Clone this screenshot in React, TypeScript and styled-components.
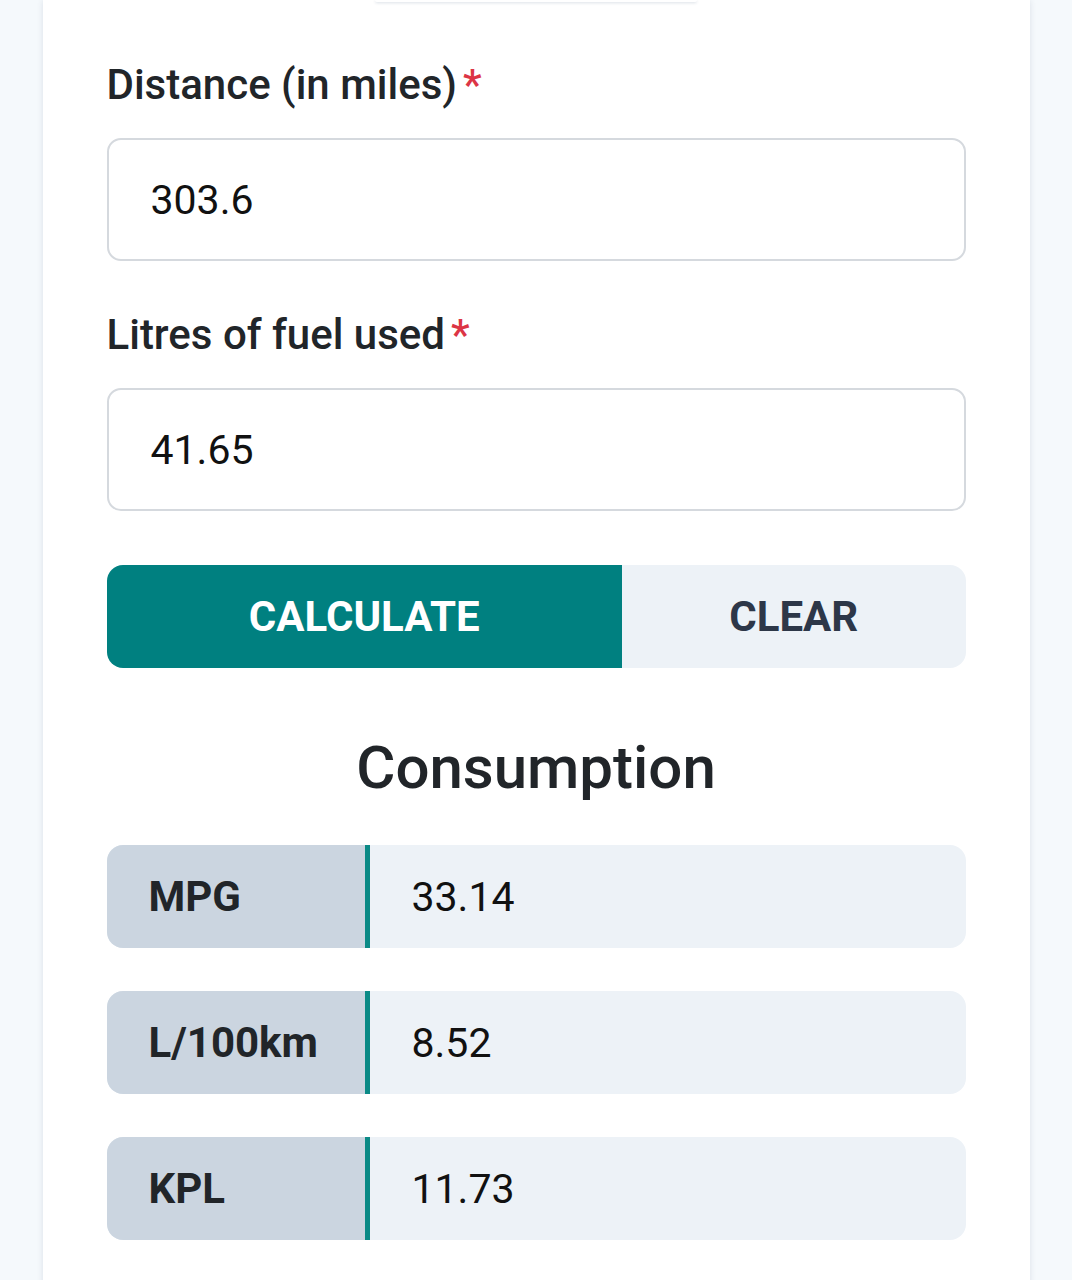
import styled, { createGlobalStyle } from 'styled-components';

const GlobalStyle = createGlobalStyle`
	html, body {
		margin: 0;
		padding: 0;
		background: #f5f9fc;
		font-family: Roboto, 'Liberation Sans', sans-serif;
		color: #212529;
	}
	* {
		box-sizing: border-box;
	}
`;

const Page = styled.div`
	display: flex;
	justify-content: center;
	min-height: 1280px;
	overflow: hidden;
`;

const Card = styled.div`
	width: 987px;
	background: #ffffff;
	box-shadow: 0 0 6px rgba(30, 50, 80, 0.12);
	padding: 0 64px 80px 64px;
	display: flex;
	flex-direction: column;
`;

const TopBox = styled.div`
	align-self: center;
	width: 322px;
	height: 2px;
	background: #ffffff;
	border-radius: 0 0 10px 10px;
	box-shadow: 0 1px 3px rgba(30, 60, 100, 0.18);
	margin-bottom: 53px;
`;

const Field = styled.div`
	display: flex;
	flex-direction: column;
	margin-bottom: 44px;

	&.last {
		margin-bottom: 54px;
	}
`;

const Label = styled.label`
	font-size: 42px;
	line-height: 60px;
	font-weight: 500;
	color: #212529;
	margin-bottom: 23px;

	span {
		color: #dc3545;
		margin-left: 6px;
	}
`;

const Input = styled.input`
	height: 123px;
	width: 100%;
	border: 2px solid #d5d9de;
	border-radius: 14px;
	padding: 0 42px;
	font-family: Roboto, 'Liberation Sans', sans-serif;
	font-size: 41px;
	color: #111111;
	background: #ffffff;
	outline: none;
`;

const ButtonRow = styled.div`
	display: flex;
	height: 103px;
	border-radius: 16px;
	overflow: hidden;
	margin-bottom: 65px;
`;

const Button = styled.button<{ $primary?: boolean }>`
	flex: ${(p) => (p.$primary ? 3 : 2)} 1 0;
	padding: 0;
	border: none;
	font-family: Roboto, 'Liberation Sans', sans-serif;
	font-size: 42px;
	font-weight: 700;
	text-transform: uppercase;
	background: ${(p) => (p.$primary ? '#008080' : '#edf2f7')};
	color: ${(p) => (p.$primary ? '#ffffff' : '#2d3748')};
	cursor: pointer;
`;

const Heading = styled.h2`
	margin: 0 0 42px 0;
	text-align: center;
	font-size: 60px;
	line-height: 70px;
	font-weight: 500;
	color: #212529;
`;

const Results = styled.div`
	display: flex;
	flex-direction: column;
	gap: 43px;
`;

const ResultRow = styled.div`
	display: flex;
	height: 103px;
	border-radius: 16px;
	overflow: hidden;
	background: #edf2f7;
`;

const ResultLabel = styled.div`
	width: 263px;
	background: #cbd5e0;
	border-right: 5px solid #0b8a86;
	display: flex;
	align-items: center;
	padding-left: 42px;
	font-size: 42px;
	font-weight: 700;
	color: #212529;
`;

const ResultValue = styled.div`
	flex: 1;
	display: flex;
	align-items: center;
	padding-left: 42px;
	font-size: 41px;
	color: #111111;
`;

const results = [
	{ label: 'MPG', value: '33.14' },
	{ label: 'L/100km', value: '8.52' },
	{ label: 'KPL', value: '11.73' },
];

export default function App() {
	return (
		<>
			<GlobalStyle />
			<Page>
				<Card>
					<TopBox />
					<Field>
						<Label>
							Distance (in miles)<span>*</span>
						</Label>
						<Input defaultValue='303.6' />
					</Field>
					<Field className='last'>
						<Label>
							Litres of fuel used<span>*</span>
						</Label>
						<Input defaultValue='41.65' />
					</Field>
					<ButtonRow>
						<Button $primary>Calculate</Button>
						<Button>Clear</Button>
					</ButtonRow>
					<Heading>Consumption</Heading>
					<Results>
						{results.map((r) => (
							<ResultRow key={r.label}>
								<ResultLabel>{r.label}</ResultLabel>
								<ResultValue>{r.value}</ResultValue>
							</ResultRow>
						))}
					</Results>
				</Card>
			</Page>
		</>
	);
}
